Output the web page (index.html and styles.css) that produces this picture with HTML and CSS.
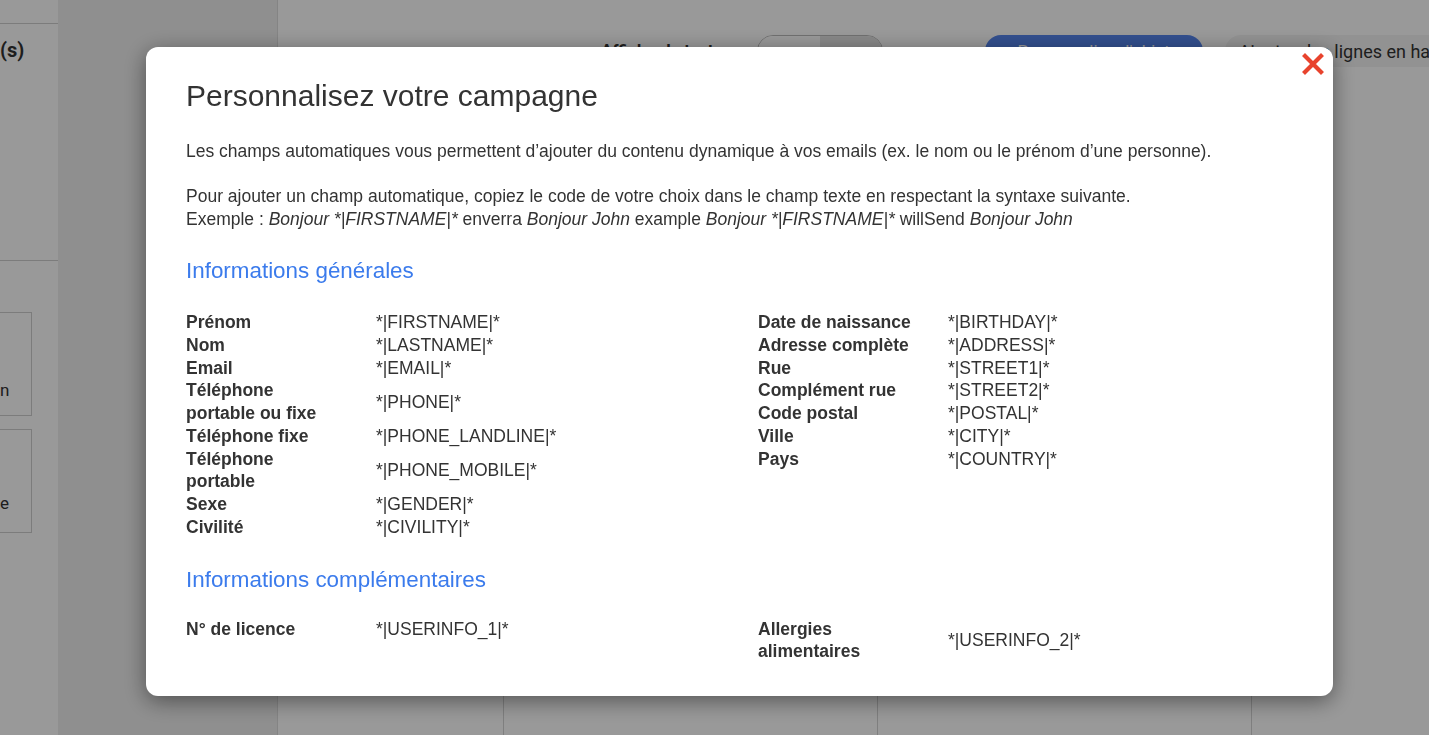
FILE: index.html
```html
<!DOCTYPE html>
<html lang="fr">
<head>
    <meta charset="UTF-8">
    <meta name="viewport" content="width=device-width, initial-scale=1.0">
    <title>Personnalisez votre campagne</title>
    <link rel="stylesheet" href="styles.css">
</head>
<body>
    <div class="app">
        <aside class="sidebar">
            <div class="side-top"></div>
            <div class="side-title">(s)</div>
            <div class="side-box"><span class="side-text">n</span></div>
            <div class="side-box"><span class="side-text">e</span></div>
        </aside>

        <section class="panel"></section>

        <main class="main">
            <div class="toolbar">
                <span class="toolbar-label">Afficher le texte</span>
                <div class="toggle">
                    <span class="toggle-on"></span>
                    <span class="toggle-off"></span>
                </div>
                <button class="btn-blue">Personnaliser l'objet</button>
                <button class="btn-grey">Ajouter des lignes en haut</button>
            </div>
            <div class="columns">
                <div class="col col-small"></div>
                <div class="col"></div>
                <div class="col"></div>
                <div class="col col-last"></div>
            </div>
        </main>
    </div>

    <div class="overlay">
        <div class="modal">
            <button class="close-btn" aria-label="Fermer">
                <svg width="22" height="22" viewBox="0 0 22 22">
                    <path d="M3 3 L19 19 M19 3 L3 19" stroke="#e8432d" stroke-width="4.2" stroke-linecap="square"/>
                </svg>
            </button>

            <h2 class="modal-title">Personnalisez votre campagne</h2>

            <p class="intro">Les champs automatiques vous permettent d’ajouter du contenu dynamique à vos emails (ex. le nom ou le prénom d’une personne).</p>

            <p class="intro second">Pour ajouter un champ automatique, copiez le code de votre choix dans le champ texte en respectant la syntaxe suivante.<br>
                Exemple : <em>Bonjour *|FIRSTNAME|*</em> enverra <em>Bonjour John</em> example <em>Bonjour *|FIRSTNAME|*</em> willSend <em>Bonjour John</em></p>

            <h3 class="section-title">Informations générales</h3>

            <div class="fields">
                <table class="field-table">
                    <tr><th>Prénom</th><td>*|FIRSTNAME|*</td></tr>
                    <tr><th>Nom</th><td>*|LASTNAME|*</td></tr>
                    <tr><th>Email</th><td>*|EMAIL|*</td></tr>
                    <tr><th>Téléphone portable ou fixe</th><td>*|PHONE|*</td></tr>
                    <tr><th>Téléphone fixe</th><td>*|PHONE_LANDLINE|*</td></tr>
                    <tr><th>Téléphone portable</th><td>*|PHONE_MOBILE|*</td></tr>
                    <tr><th>Sexe</th><td>*|GENDER|*</td></tr>
                    <tr><th>Civilité</th><td>*|CIVILITY|*</td></tr>
                </table>
                <table class="field-table">
                    <tr><th>Date de naissance</th><td>*|BIRTHDAY|*</td></tr>
                    <tr><th>Adresse complète</th><td>*|ADDRESS|*</td></tr>
                    <tr><th>Rue</th><td>*|STREET1|*</td></tr>
                    <tr><th>Complément rue</th><td>*|STREET2|*</td></tr>
                    <tr><th>Code postal</th><td>*|POSTAL|*</td></tr>
                    <tr><th>Ville</th><td>*|CITY|*</td></tr>
                    <tr><th>Pays</th><td>*|COUNTRY|*</td></tr>
                </table>
            </div>

            <h3 class="section-title second">Informations complémentaires</h3>

            <div class="fields extra">
                <table class="field-table">
                    <tr><th>N° de licence</th><td>*|USERINFO_1|*</td></tr>
                </table>
                <table class="field-table">
                    <tr><th>Allergies alimentaires</th><td>*|USERINFO_2|*</td></tr>
                </table>
            </div>
        </div>
    </div>
</body>
</html>
```

FILE: styles.css
```css
body {
    margin: 0;
    padding: 0;
    font-family: "Liberation Sans", Arial, sans-serif;
    color: #333333;
    overflow: hidden;
}

/* Application behind the modal */
.app {
    display: flex;
    height: 100vh;
    background-color: #ffffff;
}

.sidebar {
    width: 58px;
    flex-shrink: 0;
    background-color: #ffffff;
    font-family: Roboto, sans-serif;
}

.side-top {
    height: 23px;
    border-bottom: 1px solid #cfcfcf;
}

.side-title {
    font-size: 20px;
    font-weight: bold;
    line-height: 24px;
    padding-top: 14px;
    height: 222px;
    border-bottom: 1px solid #cfcfcf;
}

.side-box {
    width: 32px;
    height: 104px;
    box-sizing: border-box;
    border: 1px solid #cfcfcf;
    border-left: none;
    margin-top: 51px;
    font-size: 17px;
    line-height: 20px;
    padding-top: 67px;
}

.side-box + .side-box {
    margin-top: 13px;
    padding-top: 63px;
}

.side-text {
    display: block;
}

.panel {
    width: 219px;
    flex-shrink: 0;
    background-color: #eeeeee;
    border-right: 1px solid #dddddd;
}

.main {
    flex: 1;
    display: flex;
    flex-direction: column;
    background-color: #ffffff;
    overflow: hidden;
}

.toolbar {
    height: 98px;
    display: flex;
    align-items: flex-start;
    padding-top: 35px;
    box-sizing: border-box;
    font-family: Roboto, sans-serif;
}

.toolbar > * {
    flex-shrink: 0;
}

.toolbar-label {
    margin-left: 323px;
    margin-top: 5px;
    font-weight: bold;
    font-size: 17px;
}

.toggle {
    display: flex;
    margin-left: 34px;
    width: 124px;
    height: 32px;
    border: 1px solid #bbbbbb;
    border-radius: 16px;
    overflow: hidden;
}

.toggle-on {
    flex: 1;
    background-color: #ffffff;
}

.toggle-off {
    flex: 1;
    background-color: #e4e4e4;
}

.btn-blue {
    margin-left: 102px;
    width: 218px;
    height: 32px;
    border: none;
    border-radius: 16px;
    background-color: #5585ee;
    color: #ffffff;
    font-family: Roboto, sans-serif;
    font-size: 17px;
}

.btn-grey {
    margin-left: 22px;
    height: 32px;
    padding: 0 14px;
    border: none;
    border-radius: 16px 0 0 16px;
    background-color: #f4f4f4;
    color: #333;
    font-family: Roboto, sans-serif;
    font-size: 18px;
    white-space: nowrap;
}

.columns {
    flex: 1;
    display: flex;
}

.col {
    width: 374px;
    box-sizing: border-box;
    border-right: 1px solid #d4d4d4;
}

.col-small {
    width: 226px;
}

.col-last {
    flex: 1;
    border-right: none;
}

/* Modal */
.overlay {
    position: fixed;
    inset: 0;
    background-color: rgba(0, 0, 0, 0.4);
}

.modal {
    position: absolute;
    left: 146px;
    top: 47px;
    width: 1187px;
    box-sizing: border-box;
    padding: 32px 40px 33px;
    background-color: #ffffff;
    border-radius: 12px;
    box-shadow: 0 5px 22px rgba(0, 0, 0, 0.45);
}

.close-btn {
    position: absolute;
    top: 6px;
    right: 9px;
    padding: 0;
    border: none;
    background: none;
    cursor: pointer;
}

.close-btn svg {
    display: block;
}

.modal-title {
    margin: 0;
    font-size: 30px;
    font-weight: normal;
    line-height: 34px;
    color: #333333;
}

.intro {
    margin: 27px 0 0;
    font-size: 17.5px;
    line-height: 23px;
}

.intro.second {
    margin-top: 22px;
}

.section-title {
    margin: 26px 0 0;
    font-size: 22.4px;
    font-weight: normal;
    line-height: 28px;
    color: #3b7bec;
}

.section-title.second {
    margin-top: 27px;
}

.fields {
    display: grid;
    grid-template-columns: 572px 1fr;
    align-items: start;
    margin-top: 26px;
}

.fields.extra {
    margin-top: 24px;
}

.field-table {
    border-collapse: collapse;
    font-size: 17.5px;
    line-height: 22.75px;
}

.field-table th {
    width: 156px;
    padding: 0 34px 0 0;
    text-align: left;
    font-weight: bold;
    vertical-align: middle;
}

.field-table td {
    padding: 0;
    vertical-align: middle;
}
```
